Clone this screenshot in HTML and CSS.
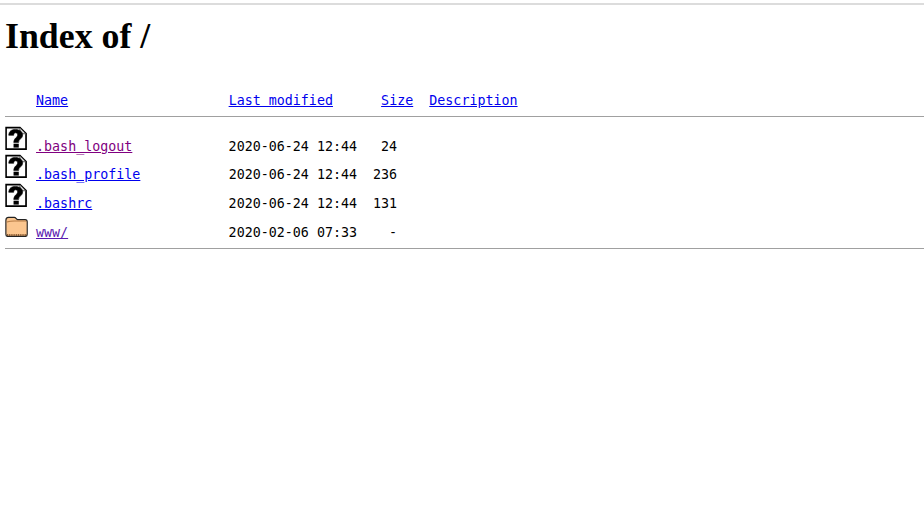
FILE: index.html
```html
<!DOCTYPE html>
<html lang="en">
<head>
    <meta charset="UTF-8">
    <meta name="viewport" content="width=device-width, initial-scale=1.0">
    <title>Index of /</title>
    <link rel="stylesheet" href="styles.css">
</head>
<body>
    <hr class="top-rule">
    <div id="app">
        <h1>Index of /</h1>
        <pre class="listing-head"><span class="icon-gap"></span> <a href="#">Name</a>                    <a href="#">Last modified</a>      <a href="#">Size</a>  <a href="#">Description</a></pre>
        <hr>
        <div class="listing">
            <div class="row"><svg class="icon" viewBox="0 0 20 22"><use href="#unknown"></use></svg> <a class="seen" href="#">.bash_logout</a>            2020-06-24 12:44   24  </div>
            <div class="row"><svg class="icon" viewBox="0 0 20 22"><use href="#unknown"></use></svg> <a href="#">.bash_profile</a>           2020-06-24 12:44  236  </div>
            <div class="row"><svg class="icon" viewBox="0 0 20 22"><use href="#unknown"></use></svg> <a href="#">.bashrc</a>                 2020-06-24 12:44  131  </div>
            <div class="row"><svg class="icon" viewBox="0 0 20 22"><use href="#folder"></use></svg> <a class="seen-dir" href="#">www/</a>                    2020-02-06 07:33    -  </div>
        </div>
        <hr>
    </div>

    <svg class="defs" width="0" height="0">
        <symbol id="unknown" viewBox="0 0 20 22">
            <path d="M.8 1.4H13L18.4 6.8V20.4H.8Z" fill="#fff" stroke="#000" stroke-width="1.5"/>
            <path d="M13 1.8V6.8H18" fill="#ddd" stroke="#666"/>
            <path d="M3.2 8.2C3.2 4.4 6 3 9 3C12.6 3 15.4 4.8 15.4 8C15.4 11.2 11.8 11.4 11.8 14.6H7.6C7.6 10.4 11 10.2 11 8C11 6.6 10.2 6 9.2 6C8.1 6 7.5 6.9 7.5 8.2Z" fill="#000" stroke="#000" stroke-width=".5"/>
            <rect x="7.4" y="15.6" width="4.6" height="3.4" fill="#000"/>
        </symbol>
        <symbol id="folder" viewBox="0 0 20 22">
            <path d="M.6 7.5C.6 5.5 1.6 4.8 3 4.8H8C9.4 4.8 9.8 6.2 10.8 6.6H17.5C19 6.6 19.5 7.5 19.5 8.6V19.5C19.5 21 18.5 21.5 17.5 21.5H2.5C1.2 21.5 .6 20.6 .6 19.5Z" fill="#fbc68f" stroke="#222" stroke-width="1.1"/>
            <path d="M1.6 8.8C4 7.9 5.5 7.9 8 7.9H18.6" fill="none" stroke="#b57b44" stroke-width=".9"/>
            <path d="M1.6 20.2H18.6" fill="none" stroke="#6b3f1a" stroke-width="1.4" stroke-dasharray="1 .6"/>
        </symbol>
    </svg>
</body>
</html>
```

FILE: styles.css
```css
body {
    margin: 0;
    font-family: "Liberation Serif", serif;
    color: #000;
    background-color: #fff;
}

hr {
    margin: 0;
    border: 0;
    border-top: 1px solid #a0a0a0;
    height: 0;
}

.top-rule {
    margin-top: 3px;
    border-top: 2px solid #dcdcdc;
}

#app {
    padding: 0 0 0 5px;
}

h1 {
    margin: 0;
    padding-top: 10px;
    font-size: 35.8px;
    line-height: 42px;
    font-weight: bold;
}

pre, .row {
    margin: 0;
    font-family: "DejaVu Sans Mono", monospace;
    font-size: 13.333px;
}

a {
    color: #0000ee;
}

a.seen {
    color: #800080;
}

a.seen-dir {
    color: #5a1ab0;
}

.listing-head {
    margin-top: 35px;
    line-height: 17px;
    padding-bottom: 7px;
}

.icon-gap {
    display: inline-block;
    width: 23px;
}

.listing {
    padding-top: 8.7px;
    padding-bottom: 7.3px;
}

.row {
    height: 28.67px;
    line-height: 1;
    white-space: pre;
}

.icon {
    width: 23px;
    height: 25px;
}

.defs {
    position: absolute;
}
```
